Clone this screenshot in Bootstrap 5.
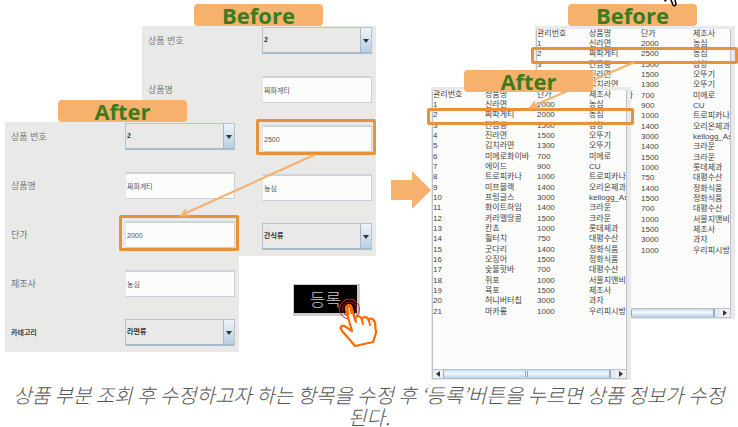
<!DOCTYPE html>
<html>
<head>
<meta charset="utf-8">
<meta name="viewport" content="width=device-width, initial-scale=1">
<title>상품 정보 수정</title>
<link href="https://cdn.jsdelivr.net/npm/bootstrap@5.3.0/dist/css/bootstrap.min.css" rel="stylesheet">
<style>
  body { font-family: "Liberation Sans", "Noto Sans CJK KR", sans-serif; background: #fff; overflow-x: hidden; }
  .scene { height: 384px; }
  .scene-forms { flex: 0 0 391px; }
  .scene-tables { flex: 1 0 311px; }
  .flow-arrow { flex: 0 0 36px; min-width: 0; padding-top: 171px; }
  .flow-arrow svg { overflow: visible; }
  .links { inset: 0; width: 100%; height: 100%; pointer-events: none; overflow: visible; }

  /* windows on the canvas */
  .win { position: absolute; }
  .form-before { left: 142px; top: 26px; }
  .form-after { left: 5px; top: 122px; }
  .table-before { left: 108px; top: 26px; }
  .table-after { left: 4px; top: 87px; }
  .tag { position: absolute; width: 129px; height: 22px; border-radius: 4px; background: #f6b16c; color: #3c7b20;
         font: 700 22px/22px "Open Sans", "Noto Sans", sans-serif; text-align: center; margin: 0; }
  .tag-fb { left: 194px; top: 4px; }
  .tag-fa { left: 58px; top: 100px; }
  .tag-tb { left: 141px; top: 4px; }
  .tag-ta { left: 37px; top: 70px; }

  /* product form */
  .product-form { width: 234px; padding: 1px 4px 6px 6px; background: #e9e9e8; display: grid; gap: 22px; }
  .line { display: flex; align-items: center; justify-content: space-between; }
  .line label { font-size: 9px; line-height: 12px; color: #777; }
  .line label.strong { font-size: 7px; font-weight: 700; color: #444; }
  .field { position: relative; width: 110px; height: 27px; }
  .field input, .field select { display: block; width: 100%; height: 100%; border-radius: 0; font-size: 7px; padding: 0 1px; outline: 0; }
  .field input { background: #fcfcfb; border: 1px solid #cbd0d8; border-left-color: #e4e6e8; border-top: 2px solid #cfd4dc; color: #555; }
  .field select { appearance: none; border: 1px solid #b3c3d3; border-bottom: 2px solid #a9bccd; font-weight: 700; color: #333;
                  background: linear-gradient(#eef4f9, #b7cfe2) right / 11px 100% no-repeat #e9e9e8; }
  .pick::before { content: ""; position: absolute; right: 11px; top: 1px; bottom: 1px; width: 1px; background: #a3b8cb; }
  .pick::after { content: ""; position: absolute; right: 3px; top: 12px; border: 3px solid transparent; border-top: 4px solid #333; border-bottom: 0; }
  .ring { position: absolute; border: 3px solid #e89237; border-radius: 2px; pointer-events: none; }
  .field .ring { inset: -6px -4px -3px -6px; }

  /* product list */
  .product-list { width: 200px; height: 293px; padding: 3px 4px 1px 1px; background: #e9e9eb; display: flex; flex-direction: column; }
  .sheet { flex: 1; overflow: hidden; background: #fcfcfa; border-left: 1px solid #b9c2cd; border-right: 1px solid #b9c2cd; }
  .sheet table { width: 208px; height: 227px; table-layout: fixed; border-collapse: collapse; font-size: 8px; line-height: 10px; color: #444; }
  .sheet th { font-weight: 400; }
  .sheet th, .sheet td { padding: 0; white-space: nowrap; overflow: visible; }
  .product-list .ring { left: -4px; right: -3px; top: 21px; height: 17px; }
  .hbar { display: flex; height: 10px; background: #e6e9ec; border: 1px solid #b5c3d0; }
  .hbar button { width: 10px; border: 0; padding: 0; background: #f0f0f0; display: flex; align-items: center; justify-content: center; }
  .hbar .thumb { flex: 1; margin-right: 5px; border: 1px solid #91aecb; border-width: 0 2px 0 1px; background: linear-gradient(#c3d8ed, #f6faff 40%, #b9d1e8); display: flex; justify-content: center; }
  .hbar .thumb span { width: 3px; margin: 1px 0; border: solid #89a8c8; border-width: 0 1px; }

  .save { position: absolute; left: 293px; top: 284px; width: 67px; height: 32px; padding: 0; border: 1px solid #ccc; border-width: 1px 3px 3px 1px; background: #000; color: #c9c9c9;
          font: 300 17px/26px "Noto Sans CJK KR", sans-serif; }
  .hand { position: absolute; left: 334px; top: 294px; }
  .pointer { position: absolute; left: 236px; top: 0; }
  .caption { font: italic 300 20px/22px "Noto Sans CJK KR", sans-serif; color: #555; margin: 0 3px; text-align: center; word-break: keep-all; }
</style>
<script src="https://cdn.jsdelivr.net/npm/bootstrap@5.3.0/dist/js/bootstrap.bundle.min.js"></script>
</head>
<body>
<main>
  <div class="d-flex">
    <section class="scene scene-forms position-relative">
      <form class="win form-before product-form">
        <div class="line"><label for="b1">상품 번호</label><div class="field pick"><select id="b1"><option>2</option></select></div></div>
        <div class="line"><label for="b2">상품명</label><div class="field"><input id="b2" value="짜파게티"></div></div>
        <div class="line"><label for="b3">단가</label><div class="field"><input id="b3" value="2500"><span class="ring"></span></div></div>
        <div class="line"><label for="b4">제조사</label><div class="field"><input id="b4" value="농심"></div></div>
        <div class="line"><label for="b5" class="strong">카테고리</label><div class="field pick"><select id="b5"><option>간식류</option></select></div></div>
      </form>
      <h2 class="tag tag-fb">Before</h2>
      <form class="win form-after product-form">
        <div class="line"><label for="a1">상품 번호</label><div class="field pick"><select id="a1"><option>2</option></select></div></div>
        <div class="line"><label for="a2">상품명</label><div class="field"><input id="a2" value="짜파게티"></div></div>
        <div class="line"><label for="a3">단가</label><div class="field"><input id="a3" value="2000"><span class="ring"></span></div></div>
        <div class="line"><label for="a4">제조사</label><div class="field"><input id="a4" value="농심"></div></div>
        <div class="line"><label for="a5" class="strong">카테고리</label><div class="field pick"><select id="a5"><option>라면류</option></select></div></div>
      </form>
      <h2 class="tag tag-fa">After</h2>
      <svg class="links position-absolute" aria-hidden="true"><path d="M314 155L186 213" stroke="#f6b16c" stroke-width="2"/><path d="M180 216l6-7-1 4 4 3z" fill="#f6b16c" stroke="#f6b16c"/></svg>
      <button type="button" class="save">등록</button>
      <svg class="hand" width="48" height="58" viewBox="0 0 48 58" fill="none" aria-hidden="true">
        <circle cx="15.500" cy="15" r="10" stroke="#d8243a"/><circle cx="15.500" cy="15" r="7" stroke="#a81826"/>
        <path d="M12 16c-1-6 5-7 6-1l3 11c0-5 6-5 7 0 0-4 6-4 7 1 0-4 5-3 6 2l1 10-3 9-18 4-5-6-8-9c-3-4 0-7 4-4l6 4z" fill="#fff" stroke="#ff6a00" stroke-width="2.200" stroke-linejoin="round"/>
        <path d="M14 21l-1-6c0-4 4-4 4 0l1 5" stroke="#ff6a00" stroke-width="3"/><path d="M21 24l1 4M28 26l1 4M35 27l1 4" stroke="#ff6a00" stroke-width="2" stroke-linecap="round"/>
      </svg>
    </section>

    <div class="flow-arrow"><svg width="40" height="38" viewBox="0 0 40 38" aria-hidden="true"><path d="M0 9h21V0l19 19-19 19v-9H0z" fill="#f6b16c"/></svg></div>

    <section class="scene scene-tables position-relative">
      <div class="win table-before product-list">
        <div class="sheet"><table data-price="2500"><thead><tr><th>관리번호</th><th>상품명</th><th>단가</th><th>제조사</th></tr></thead><tbody></tbody></table></div>
        <div class="hbar"><button type="button" aria-label="왼쪽"><svg width="4" height="6"><path d="M4 0v6L0 3z" fill="#333"/></svg></button><div class="thumb"><span></span></div><button type="button" aria-label="오른쪽"><svg width="4" height="6"><path d="M0 0v6l4-3z" fill="#333"/></svg></button></div>
        <span class="ring"></span>
      </div>
      <h2 class="tag tag-tb">Before</h2>
      <div class="win table-after product-list">
        <div class="sheet"><table data-price="2000"><thead><tr><th>관리번호</th><th>상품명</th><th>단가</th><th>제조사</th></tr></thead><tbody></tbody></table></div>
        <div class="hbar"><button type="button" aria-label="왼쪽"><svg width="4" height="6"><path d="M4 0v6L0 3z" fill="#333"/></svg></button><div class="thumb"><span></span></div><button type="button" aria-label="오른쪽"><svg width="4" height="6"><path d="M0 0v6l4-3z" fill="#333"/></svg></button></div>
        <span class="ring"></span>
      </div>
      <svg class="links position-absolute" aria-hidden="true"><path d="M208 62L108 105" stroke="#f6b16c" stroke-width="2"/><path d="M102 108l6-7-1 4 5 3z" fill="#f6b16c" stroke="#f6b16c"/></svg>
      <h2 class="tag tag-ta">After</h2>
      <svg class="pointer" width="16" height="8" viewBox="0 0 16 8" aria-hidden="true"><path d="M1 0h3L2 2z" fill="#000"/><path d="M8 0l2 5q2 2 3-1l-1-4" fill="#fff" stroke="#000" stroke-width="1.500"/></svg>
    </section>
  </div>
  <p class="caption">상품 부분 조회 후 수정하고자 하는 항목을 수정 후 ‘등록’버튼을 누르면 상품 정보가 수정 된다.</p>
</main>
<script>
  const products = [
    ['신라면', 2000, '농심'], ['짜파게티', 0, '농심'], ['간짬뽕', 1500, '삼양'], ['진라면', 1500, '오뚜기'],
    ['김치라면', 1300, '오뚜기'], ['미에로화이바', 700, '미에로'], ['에이드', 900, 'CU'], ['트로피카나', 1000, '트로피카나'],
    ['미쯔블랙', 1400, '오리온제과'], ['프링글스', 3000, 'kellogg_As'], ['화이트하임', 1400, '크라운'], ['카라멜땅콩', 1500, '크라운'],
    ['칸쵸', 1000, '롯데제과'], ['휠터치', 750, '대평수산'], ['굿다리', 1400, '정화식품'], ['오징어', 1500, '정화식품'],
    ['숯불핫바', 700, '대평수산'], ['쥐포', 1000, '서울지앤비'], ['육포', 1500, '제조사'], ['허니버터칩', 3000, '과자'], ['마카롱', 1000, '우리피시방']
  ];
  document.querySelectorAll('table[data-price]').forEach(t => {
    t.tBodies[0].innerHTML = products.map(([name, price, maker], i) =>
      `<tr><td>${i + 1}</td><td>${name}</td><td>${price || t.dataset.price}</td><td>${maker}</td></tr>`).join('');
  });
</script>
</body>
</html>
